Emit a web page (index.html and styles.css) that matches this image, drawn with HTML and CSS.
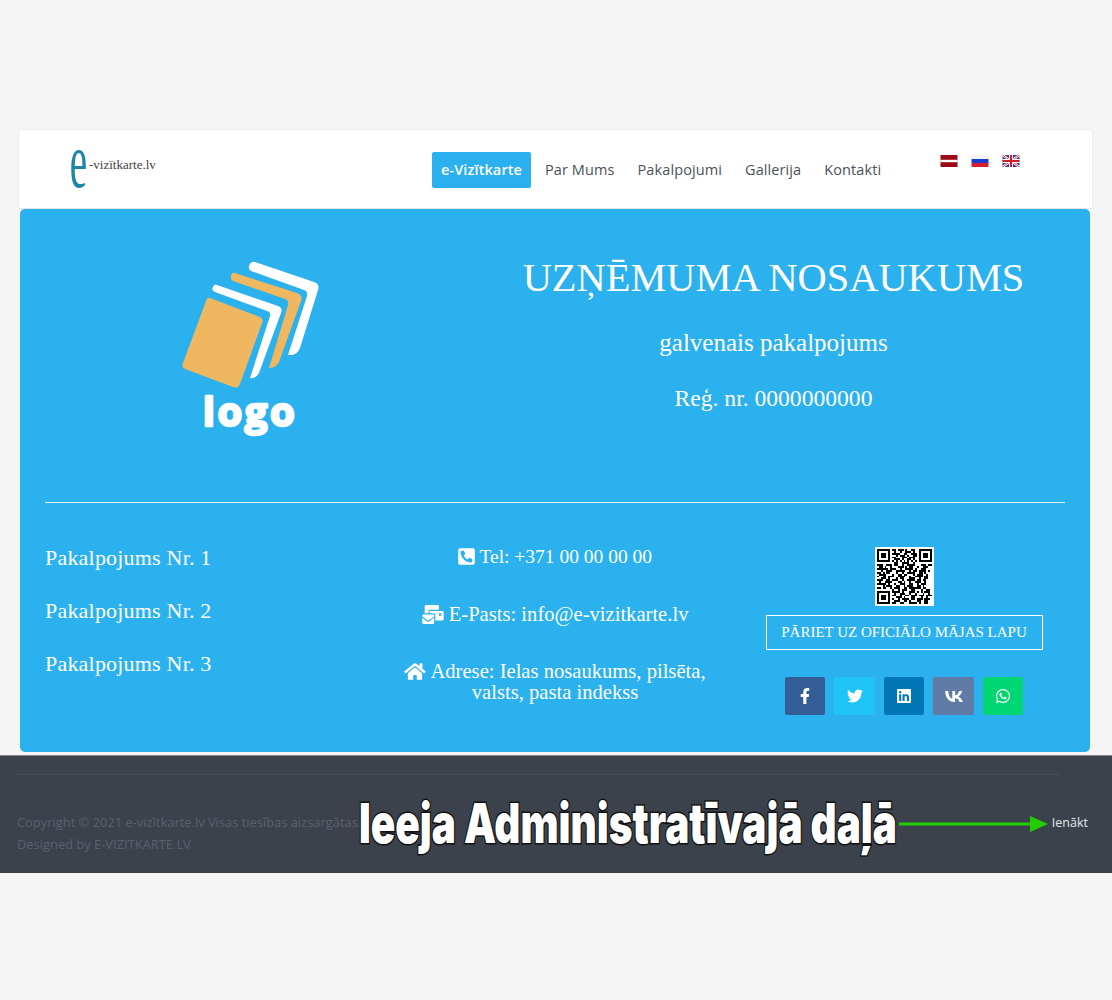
FILE: index.html
```html
<!DOCTYPE html>
<html lang="lv">
<head>
  <meta charset="utf-8">
  <title>e-vizītkarte.lv</title>
  <link rel="stylesheet" href="styles.css">
</head>
<body>

<div class="navbar">
  <a class="brand"><span class="brand-e">e</span><span class="brand-text">-vizītkarte.lv</span></a>
  <ul class="menu">
    <li class="active">e-Vizītkarte</li>
    <li>Par Mums</li>
    <li>Pakalpojumi</li>
    <li>Gallerija</li>
    <li>Kontakti</li>
  </ul>
  <div class="flags">
    <svg viewBox="0 0 17 12"><rect width="17" height="12" fill="#9e0a14"/><rect y="4.8" width="17" height="2.4" fill="#fff"/></svg>
    <svg viewBox="0 0 17 12"><rect width="17" height="4" fill="#f4f4f4"/><rect y="4" width="17" height="4" fill="#1a3fd0"/><rect y="8" width="17" height="4" fill="#d81e2c"/></svg>
    <svg viewBox="0 0 17 12"><rect width="17" height="12" fill="#2b3f86"/><path d="M0 0l17 12M17 0L0 12" stroke="#fff" stroke-width="2.4"/><path d="M0 0l17 12M17 0L0 12" stroke="#cf1b2b" stroke-width=".8"/><path d="M8.5 0v12M0 6h17" stroke="#fff" stroke-width="4"/><path d="M8.5 0v12M0 6h17" stroke="#cf1b2b" stroke-width="2.2"/></svg>
  </div>
</div>

<div class="card">
  <div class="top-row">
    <div class="logo">
      <svg width="150" height="190" viewBox="0 0 150 190">
        <path d="M80 4 L139 24 Q145 26 143 32 L125 90 Q122 98 113 97 L132 38 Q133 33 129 32 L76 13 Q73 11 74 8 Q76 3 80 4Z" fill="#fff"/>
        <path d="M60 15 L122 35 Q128 37 126 43 L104 104 Q101 110 94 110 L113 47 Q114 42 110 41 L58 23 Q55 21 56 18 Q57 14 60 15Z" fill="#efb75f"/>
        <path d="M42 27 L103 48 Q108 50 106 55 L84 115 Q81 121 75 120 L95 58 Q96 54 92 53 L40 34 Q36 32 38 29 Q39 26 42 27Z" fill="#fff"/>
        <path d="M35 40 L85 59 Q89 61 87 65 L65 126 Q63 131 58 129 L10 111 Q6 109 8 105 L31 43 Q32 39 35 40Z" fill="#efb75f"/>
        <text x="75" y="168" class="logo-word" text-anchor="middle">logo</text>
      </svg>
    </div>
    <div class="company">
      <h1>UZŅĒMUMA NOSAUKUMS</h1>
      <h2>galvenais pakalpojums</h2>
      <h3>Reģ. nr. 0000000000</h3>
    </div>
  </div>

  <hr class="divider">

  <div class="info-row">
    <div class="services">
      <p>Pakalpojums Nr. 1</p>
      <p>Pakalpojums Nr. 2</p>
      <p>Pakalpojums Nr. 3</p>
    </div>
    <div class="contacts">
      <p class="tel"><svg class="ico" viewBox="0 0 448 512"><path d="M400 32H48A48 48 0 0 0 0 80v352a48 48 0 0 0 48 48h352a48 48 0 0 0 48-48V80a48 48 0 0 0-48-48zm-16.39 307.37l-15 65A15 15 0 0 1 354 416C194 416 64 286.29 64 126a15.7 15.7 0 0 1 11.63-14.61l65-15A18.23 18.23 0 0 1 144 96a16.27 16.27 0 0 1 13.79 9.09l30 70A17.9 17.9 0 0 1 189 181a17 17 0 0 1-5.5 11.61l-37.89 31a231.91 231.91 0 0 0 110.78 110.78l31-37.89A17 17 0 0 1 299 291a17.85 17.85 0 0 1 5.91 1.21l70 30A16.25 16.25 0 0 1 384 336a17.41 17.41 0 0 1-.39 3.37z"/></svg> Tel: +371 00 00 00 00</p>
      <p class="mail"><svg class="ico ico-wide" viewBox="0 0 576 512"><path d="M160 448c-25.6 0-51.2-22.4-64-32-64-44.8-83.2-60.8-96-70.4V480c0 17.67 14.33 32 32 32h256c17.67 0 32-14.33 32-32V345.6c-12.8 9.6-32 25.6-96 70.4-12.8 9.6-38.4 32-64 32zm128-192H32c-17.67 0-32 14.33-32 32v16c25.6 19.2 22.4 19.2 115.2 86.4 9.6 6.4 28.8 25.6 44.8 25.6s35.2-19.2 44.8-22.4c92.8-67.2 89.6-67.2 115.2-86.4V288c0-17.67-14.33-32-32-32zm256-96H224c-17.67 0-32 14.33-32 32v32h96c33.21 0 60.59 25.42 63.71 57.82l.29-.22V416h192c17.67 0 32-14.33 32-32V192c0-17.67-14.33-32-32-32zm-32 128h-64v-64h64v64zm-352-96c0-35.29 28.71-64 64-64h224V32c0-17.67-14.33-32-32-32H96C78.33 0 64 14.33 64 32v192h96v-32z"/></svg> E-Pasts: info@e-vizitkarte.lv</p>
      <p class="addr"><svg class="ico ico-wide" viewBox="0 0 576 512"><path d="M280.37 148.26L96 300.11V464a16 16 0 0 0 16 16l112.06-.29a16 16 0 0 0 15.92-16V368a16 16 0 0 1 16-16h64a16 16 0 0 1 16 16v95.64a16 16 0 0 0 16 16.05L464 480a16 16 0 0 0 16-16V300L295.67 148.26a12.19 12.19 0 0 0-15.3 0zM571.6 251.47L488 182.56V44.05a12 12 0 0 0-12-12h-56a12 12 0 0 0-12 12v72.61L318.47 43a48 48 0 0 0-61 0L4.34 251.47a12 12 0 0 0-1.6 16.9l25.5 31A12 12 0 0 0 45.15 301l235.22-193.74a12.19 12.19 0 0 1 15.3 0L530.9 301a12 12 0 0 0 16.9-1.6l25.5-31a12 12 0 0 0-1.7-16.93z"/></svg> Adrese: Ielas nosaukums, pilsēta,<br>valsts, pasta indekss</p>
    </div>
    <div class="actions">
      <svg class="qr" viewBox="-1 -1 31 31" shape-rendering="crispEdges">
        <rect x="-1" y="-1" width="31" height="31" fill="#fff"/>
        <path fill="#000" fill-rule="evenodd" d="M0 0h7v7H0zM1 1v5h5V1zM2 2h3v3H2zM22 0h7v7h-7zM23 1v5h5V1zM24 2h3v3h-3zM0 22h7v7H0zM1 23v5h5v-5zM2 24h3v3H2z"/>
        <path stroke="#000" stroke-width="1" fill="none" d="M8 .5h2m1 0h3m1 0h1m2 0h2M9 1.5h1m2 0h1m2 0h3m1 0h1M8 2.5h4m2 0h2m2 0h3M10 3.5h1m1 0h3m1 0h1m2 0h2M8 4.5h2m3 0h3m1 0h3M9 5.5h3m1 0h1m2 0h2m1 0h1M8 6.5h1m1 0h1m1 0h1m1 0h1m1 0h1m1 0h1m1 0h1M9 7.5h2m2 0h4m2 0h1M0 8.5h3m2 0h3m1 0h2m2 0h1m2 0h4m3 0h3m1 0h2M1 9.5h2m1 0h1m2 0h1m3 0h3m1 0h1m1 0h2m2 0h1m2 0h3M0 10.5h6m1 0h3m2 0h1m2 0h4m1 0h1m2 0h3M2 11.5h1m2 0h3m2 0h5m2 0h1m1 0h2m1 0h4m1 0h1M0 12.5h2m1 0h1m1 0h2m3 0h1m2 0h1m2 0h4m2 0h2m1 0h1M1 13.5h4m3 0h1m2 0h2m1 0h2m3 0h1m1 0h3m2 0h1M0 14.5h1m2 0h2m1 0h3m2 0h4m2 0h1m2 0h4m1 0h2M2 15.5h3m1 0h1m3 0h1m1 0h2m3 0h3m2 0h1m2 0h2M0 16.5h3m2 0h2m1 0h3m2 0h1m2 0h4m1 0h2m1 0h2M1 17.5h1m2 0h4m3 0h2m1 0h1m2 0h1m2 0h3m2 0h1M0 18.5h5m1 0h1m2 0h1m2 0h3m2 0h2m2 0h1m1 0h3M3 19.5h1m1 0h3m2 0h2m2 0h1m1 0h3m2 0h2m1 0h1M0 20.5h2m1 0h2m2 0h1m1 0h3m2 0h2m1 0h6m1 0h2M8 21.5h1m2 0h1m1 0h3m2 0h2m3 0h1m2 0h2M8 22.5h4m1 0h1m3 0h3m1 0h1m1 0h1m1 0h3M9 23.5h1m2 0h3m2 0h1m2 0h1m3 0h1m2 0h1M8 24.5h2m2 0h1m2 0h2m1 0h3m1 0h3m1 0h3M10 25.5h3m1 0h1m3 0h2m3 0h1m2 0h1M8 26.5h1m2 0h1m1 0h4m1 0h2m1 0h3m1 0h3M9 27.5h3m2 0h2m1 0h1m3 0h2m2 0h2M8 28.5h2m2 0h2m3 0h4m1 0h1m2 0h2"/>
      </svg>
      <a class="site-btn">PĀRIET UZ OFICIĀLO MĀJAS LAPU</a>
      <div class="social">
        <span class="soc soc-fb"><svg width="10" height="16" viewBox="0 0 320 512"><path d="M279.14 288l14.22-92.66h-88.91v-60.13c0-25.35 12.42-50.06 52.24-50.06h40.42V6.26S260.43 0 225.36 0c-73.22 0-121.08 44.38-121.08 124.72v70.62H22.89V288h81.39v224h100.17V288z"/></svg></span>
        <span class="soc soc-tw"><svg width="16" height="16" viewBox="0 0 512 512"><path d="M459.37 151.716c.325 4.548.325 9.097.325 13.645 0 138.72-105.583 298.558-298.558 298.558-59.452 0-114.68-17.219-161.137-47.106 8.447.974 16.568 1.299 25.34 1.299 49.055 0 94.213-16.568 130.274-44.832-46.132-.975-84.792-31.188-98.112-72.772 6.498.974 12.995 1.624 19.818 1.624 9.421 0 18.843-1.3 27.614-3.573-48.081-9.747-84.143-51.98-84.143-102.985v-1.299c13.969 7.797 30.214 12.67 47.431 13.319-28.264-18.843-46.781-51.005-46.781-87.391 0-19.492 5.197-37.36 14.294-52.954 51.655 63.675 129.3 105.258 216.365 109.807-1.624-7.797-2.599-15.918-2.599-24.04 0-57.828 46.782-104.934 104.934-104.934 30.213 0 57.502 12.67 76.67 33.137 23.715-4.548 46.456-13.32 66.599-25.34-7.798 24.366-24.366 44.833-46.132 57.827 21.117-2.273 41.584-8.122 60.426-16.243-14.292 20.791-32.161 39.308-52.628 54.253z"/></svg></span>
        <span class="soc soc-in"><svg width="14" height="16" viewBox="0 0 448 512"><path d="M416 32H31.9C14.3 32 0 46.5 0 64.3v383.4C0 465.5 14.3 480 31.9 480H416c17.6 0 32-14.5 32-32.3V64.3c0-17.8-14.4-32.3-32-32.3zM135.4 416H69V202.2h66.5V416zm-33.2-243c-21.3 0-38.5-17.3-38.5-38.5S80.9 96 102.2 96c21.2 0 38.5 17.3 38.5 38.5 0 21.3-17.2 38.5-38.5 38.5zm282.1 243h-66.4V312c0-24.8-.5-56.7-34.5-56.7-34.6 0-39.9 27-39.9 54.9V416h-66.4V202.2h63.7v29.2h.9c8.9-16.8 30.6-34.5 62.9-34.5 67.2 0 79.7 44.3 79.7 101.9V416z"/></svg></span>
        <span class="soc soc-vk"><svg width="18" height="11" viewBox="0 0 32 20"><path d="M17.4 20C6.5 20 .3 12.5 0 0h5.5c.2 9.2 4.2 13.1 7.4 13.9V0H18v7.9c3.2-.3 6.5-3.9 7.6-7.9h5.2c-.9 4.9-4.5 8.500-7.100 10 2.600 1.200 6.700 4.400 8.300 10h-5.700c-1.200-3.800-4.300-6.700-8.300-7.100V20z"/></svg></span>
        <span class="soc soc-wa"><svg width="14" height="16" viewBox="0 0 448 512"><path d="M380.9 97.1C339 55.1 283.2 32 223.9 32c-122.4 0-222 99.6-222 222 0 39.1 10.2 77.3 29.6 111L0 480l117.7-30.9c32.4 17.7 68.9 27 106.1 27h.1c122.3 0 224.1-99.6 224.1-222 0-59.3-25.2-115-67.1-157zm-157 341.6c-33.2 0-65.7-8.9-94-25.7l-6.7-4-69.8 18.3L72 359.2l-4.4-7c-18.5-29.4-28.2-63.3-28.2-98.2 0-101.7 82.8-184.5 184.6-184.5 49.3 0 95.6 19.2 130.4 54.1 34.8 34.9 56.2 81.2 56.1 130.5 0 101.8-84.9 184.6-186.6 184.6zm101.2-138.2c-5.5-2.8-32.8-16.2-37.9-18-5.1-1.9-8.8-2.8-12.5 2.8-3.7 5.6-14.3 18-17.6 21.8-3.2 3.7-6.5 4.2-12 1.4-32.6-16.3-54-29.1-75.5-66-5.7-9.8 5.7-9.1 16.3-30.3 1.8-3.7.9-6.9-.5-9.7-1.4-2.8-12.5-30.1-17.1-41.2-4.5-10.8-9.1-9.3-12.5-9.5-3.2-.2-6.9-.2-10.6-.2-3.7 0-9.7 1.4-14.8 6.9-5.1 5.6-19.4 19-19.4 46.3 0 27.3 19.9 53.7 22.6 57.4 2.8 3.7 39.1 59.7 94.8 83.8 35.2 15.2 49 16.5 66.6 13.9 10.7-1.6 32.8-13.4 37.4-26.4 4.6-13 4.6-24.1 3.2-26.4-1.3-2.5-5-3.9-10.5-6.6z"/></svg></span>
      </div>
    </div>
  </div>
</div>

<div class="footer">
  <hr class="footer-line">
  <div class="footer-row">
    <div class="copy">
      <p>Copyright © 2021 e-vizītkarte.lv Visas tiesības aizsargātas.</p>
      <p>Designed by E-VIZITKARTE.LV</p>
    </div>
    <a class="login">Ienākt</a>
  </div>
  <div class="admin-note">Ieeja Administratīvajā daļā</div>
  <svg class="admin-arrow" width="149" height="18" viewBox="0 0 149 18"><path d="M0 9h131" stroke="#22cc00" stroke-width="3"/><path d="M131 1l18 8-18 8z" fill="#22cc00"/></svg>
</div>

</body>
</html>
```

FILE: styles.css
```css
html, body {
  margin: 0;
  padding: 0;
  background: #f5f5f5;
}
body {
  padding-top: 129px;
  height: 871px;
  overflow: hidden;
  font-family: "Liberation Serif", serif;
}
p, h1, h2, h3 { margin: 0; font-weight: normal; }

/* top bar */
.navbar {
  display: flex;
  height: 78px;
  margin: 0 19px 0 18px;
  background: #fff;
  border: 1px solid #ececec;
  border-bottom: 1px solid #e4e4e4;
  border-radius: 5px 5px 0 0;
  box-sizing: content-box;
  font-family: "Open Sans", sans-serif;
}
.brand {
  display: flex;
  width: 413px;
  padding: 18px 0 0 52px;
  box-sizing: border-box;
}
.brand-e {
  display: block;
  width: 18px;
  height: 36px;
  margin-top: -16px;
  font: 34px/26px "Liberation Serif", serif;
  color: #1b86a8;
  transform: scale(1.15, 2.3);
  transform-origin: 50% 0;
}
.brand-text {
  font: 13px/34px "Liberation Serif", serif;
  color: #444;
}
.menu {
  display: flex;
  list-style: none;
  margin: 22px 0 0;
  padding: 0;
  height: 36px;
  font-size: 14.5px;
  letter-spacing: .1px;
  line-height: 36px;
  color: #4b515a;
}
.menu li { padding: 0 0 0 23px; }
.menu .active {
  width: 99px;
  padding: 0;
  text-align: center;
  background: #2ab0ee;
  color: #fff;
  font-weight: 600;
  border-radius: 2px;
  margin-right: -9px;
}
.flags {
  display: flex;
  gap: 13px;
  margin: 25px 0 0 59px;
}
.flags svg { width: 18px; height: 12px; }

/* blue card */
.card {
  margin: 0 22px 0 20px;
  height: 543px;
  background: #2bb1ee;
  border-radius: 5px;
  color: #fff;
  padding: 0 25px;
  box-sizing: border-box;
}
.top-row {
  display: grid;
  grid-template-columns: 432px 1fr;
  height: 293px;
  margin-left: -7px;
  margin-right: -12px;
}
.logo { padding: 49px 0 0 137px; }
.logo-word {
  font: bold 40px "Open Sans", sans-serif;
  letter-spacing: 2.5px;
  fill: #fff;
  stroke: #fff;
  stroke-width: 2.5;
  stroke-linejoin: round;
}
.company { text-align: center; padding-top: 43px; }
.company h1 { font-size: 40.4px; line-height: 52px; }
.company h2 { font-size: 25px; line-height: 30px; margin-top: 24px; }
.company h3 { font-size: 23.6px; line-height: 30px; margin-top: 25px; }

.divider {
  margin: 0;
  height: 1px;
  border: 0;
  background: #e6f5fc;
}
.info-row {
  display: grid;
  grid-template-columns: 340px 340px 358px;
  padding-top: 44px;
  font-size: 20.6px;
}
.services { margin-top: -1px; font-size: 22px; letter-spacing: .2px; }
.services p { line-height: 24px; margin-bottom: 29px; }
.contacts { margin-top: -1px; text-align: center; line-height: 21px; }
.contacts .tel { margin-bottom: 37px; font-size: 19.5px; }
.contacts .mail { margin-bottom: 36px; }
.ico { width: 17px; height: 19px; fill: #fff; vertical-align: -3px; }
.ico-wide { width: 22px; }

.actions {
  display: flex;
  flex-direction: column;
  align-items: center;
}
.qr { width: 59px; height: 59px; }
.site-btn {
  margin-top: 9px;
  width: 277px;
  height: 35px;
  box-sizing: border-box;
  border: 1px solid #fff;
  text-align: center;
  font-size: 15px;
  line-height: 33px;
}
.social {
  display: flex;
  gap: 9px;
  margin-top: 27px;
}
.soc {
  display: flex;
  align-items: center;
  justify-content: center;
  width: 40.5px;
  height: 38px;
  border-radius: 2px;
}
.soc svg { fill: #fff; }
.soc-fb { background: #345d96; }
.soc-tw { background: #1dc4f5; }
.soc-in { background: #0077b5; }
.soc-vk { background: #5f7ba6; }
.soc-wa { background: #00d672; }

/* footer */
.footer {
  position: relative;
  height: 118px;
  margin-top: 3px;
  background: #3b424c;
  border-top: 1px solid #888;
  box-sizing: border-box;
  font-family: "Open Sans", sans-serif;
  font-size: 12.9px;
}
.footer-line {
  margin: 0 51px 0 17px;
  padding-top: 17px;
  height: 1px;
  border: 0;
  border-bottom: 1px solid #464d58;
  box-sizing: content-box;
}
.footer-row {
  display: flex;
  justify-content: space-between;
  padding: 36px 24px 0 17px;
}
.copy { color: #59616c; line-height: 22px; }
.login { color: #e4e6e8; line-height: 24px; font-size: 12.5px; }
.admin-note {
  position: absolute;
  left: 359px;
  top: 38px;
  font: 900 55px/58px Inter, "DejaVu Sans", sans-serif;
  color: #fff;
  -webkit-text-stroke: 3px #111;
  paint-order: stroke fill;
  white-space: nowrap;
  transform: scaleX(.735);
  transform-origin: 0 50%;
}
.admin-arrow {
  position: absolute;
  left: 899px;
  top: 59px;
}
```
